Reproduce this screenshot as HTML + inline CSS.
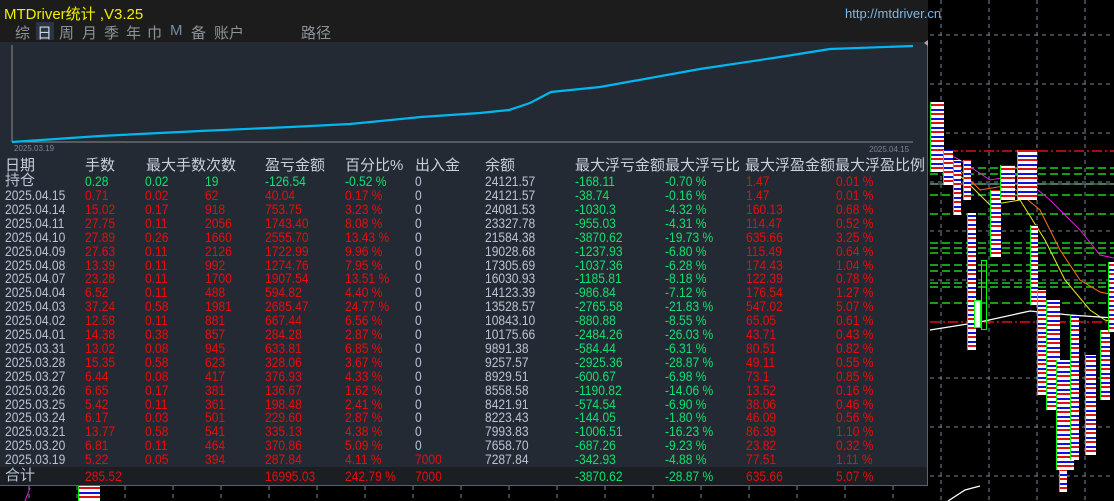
<!DOCTYPE html>
<html><head><meta charset="utf-8"><style>
*{margin:0;padding:0;box-sizing:border-box}
body{width:1114px;height:501px;overflow:hidden;background:#000;position:relative;font-family:"Liberation Sans","Noto Sans CJK SC",sans-serif}
#panel{position:absolute;left:0;top:0;width:928px;height:486px;background:#242a33;border-right:1px solid #5a6270;border-bottom:1px solid #5a6270}
#top{position:absolute;left:0;top:0;width:928px;height:42px;background:#1c1c1c}
.t{position:absolute;white-space:nowrap}
.tab{position:absolute;top:22px;font-size:15px;color:#8e939a}
.row{position:absolute;left:0;width:928px;height:14px;font-size:14px;line-height:14px}
.row span{position:absolute;white-space:nowrap;transform:scaleX(.86);transform-origin:left}
.r{color:#e80c0c}.g{color:#10e070}.w{color:#b8c4d6}
.blob{position:absolute;background:repeating-linear-gradient(0deg,#fff 0 3px,#e01010 3px 5px,#fff 5px 7px,#1010e0 7px 9px);border-left:1px solid #0f0}
</style></head><body>
<svg width="1114" height="501" style="position:absolute;left:0;top:0">
<g stroke="#7a8696" stroke-dasharray="4,4" stroke-width="1">
<line x1="941" y1="0" x2="941" y2="501"/><line x1="989" y1="0" x2="989" y2="501"/><line x1="1037" y1="0" x2="1037" y2="501"/><line x1="1085" y1="0" x2="1085" y2="501"/>
<line x1="930" y1="35" x2="1114" y2="35"/><line x1="930" y1="84" x2="1114" y2="84"/><line x1="930" y1="133" x2="1114" y2="133"/><line x1="930" y1="182" x2="1114" y2="182"/><line x1="930" y1="231" x2="1114" y2="231"/><line x1="930" y1="280" x2="1114" y2="280"/><line x1="930" y1="378" x2="1114" y2="378"/><line x1="930" y1="427" x2="1114" y2="427"/><line x1="930" y1="476" x2="1114" y2="476"/>
<line x1="29" y1="486" x2="29" y2="501"/><line x1="77" y1="486" x2="77" y2="501"/><line x1="125" y1="486" x2="125" y2="501"/><line x1="173" y1="486" x2="173" y2="501"/><line x1="221" y1="486" x2="221" y2="501"/><line x1="269" y1="486" x2="269" y2="501"/><line x1="317" y1="486" x2="317" y2="501"/><line x1="365" y1="486" x2="365" y2="501"/><line x1="413" y1="486" x2="413" y2="501"/><line x1="461" y1="486" x2="461" y2="501"/><line x1="509" y1="486" x2="509" y2="501"/><line x1="557" y1="486" x2="557" y2="501"/><line x1="605" y1="486" x2="605" y2="501"/><line x1="653" y1="486" x2="653" y2="501"/><line x1="701" y1="486" x2="701" y2="501"/><line x1="749" y1="486" x2="749" y2="501"/><line x1="797" y1="486" x2="797" y2="501"/><line x1="845" y1="486" x2="845" y2="501"/><line x1="893" y1="486" x2="893" y2="501"/>
</g>
<g stroke="#20d020" stroke-dasharray="8,4" stroke-width="1.5">
<line x1="930" y1="168" x2="1114" y2="168"/><line x1="930" y1="174" x2="1114" y2="174"/><line x1="930" y1="184" x2="1114" y2="184"/><line x1="930" y1="195" x2="1114" y2="195"/><line x1="930" y1="214" x2="1114" y2="214"/><line x1="930" y1="243" x2="1114" y2="243"/><line x1="930" y1="248" x2="1114" y2="248"/><line x1="930" y1="253" x2="1114" y2="253"/><line x1="930" y1="265" x2="1114" y2="265"/><line x1="930" y1="271" x2="1114" y2="271"/><line x1="930" y1="283" x2="1114" y2="283"/><line x1="930" y1="287" x2="1114" y2="287"/><line x1="930" y1="303" x2="1114" y2="303"/>
</g>
<g stroke="#e01010" stroke-dasharray="10,3,2,3" stroke-width="1.5">
<line x1="930" y1="151" x2="1114" y2="151"/><line x1="930" y1="322" x2="1114" y2="322"/>
</g>
<line x1="930" y1="184" x2="1114" y2="184" stroke="#8090a0"/>
<polyline points="940,150 960,160 990,180 1020,175 1050,200 1080,230 1100,255 1114,258" fill="none" stroke="#e020e0" stroke-width="1"/>
<polyline points="940,155 960,170 980,190 1010,185 1040,210 1060,250 1080,280 1100,292 1114,295" fill="none" stroke="#ff7010" stroke-width="1"/>
<polyline points="940,160 965,180 990,205 1020,200 1045,240 1065,280 1090,310 1105,320 1114,322" fill="none" stroke="#f0f020" stroke-width="1"/>
<polyline points="930,330 980,322 1030,311 1070,315 1114,318" fill="none" stroke="#fff" stroke-width="1.3"/>
<polyline points="948,501 965,490 980,486" fill="none" stroke="#fff" stroke-width="1.3"/>
<line x1="30" y1="488" x2="25" y2="501" stroke="#e020e0"/>
</svg>
<div class="blob" style="left:930px;top:102px;width:14px;height:70px"></div>
<div class="blob" style="left:943px;top:150px;width:10px;height:35px"></div>
<div class="blob" style="left:953px;top:160px;width:8px;height:55px"></div>
<div class="blob" style="left:963px;top:160px;width:8px;height:40px"></div>
<div class="blob" style="left:967px;top:213px;width:9px;height:137px"></div>
<div class="blob" style="left:990px;top:190px;width:11px;height:67px"></div>
<div class="blob" style="left:1000px;top:165px;width:15px;height:35px"></div>
<div class="blob" style="left:1017px;top:150px;width:20px;height:50px"></div>
<div class="blob" style="left:1030px;top:225px;width:8px;height:80px"></div>
<div class="blob" style="left:1037px;top:290px;width:9px;height:105px"></div>
<div class="blob" style="left:1046px;top:300px;width:14px;height:110px"></div>
<div class="blob" style="left:1056px;top:360px;width:18px;height:110px"></div>
<div class="blob" style="left:1070px;top:315px;width:9px;height:145px"></div>
<div class="blob" style="left:1085px;top:355px;width:11px;height:100px"></div>
<div class="blob" style="left:1100px;top:330px;width:10px;height:70px"></div>
<div class="blob" style="left:1108px;top:262px;width:6px;height:70px"></div>
<div class="blob" style="left:1059px;top:470px;width:8px;height:22px"></div>
<div class="blob" style="left:78px;top:486px;width:22px;height:15px"></div>
<div style="position:absolute;left:974px;top:300px;width:7px;height:28px;border:1px solid #0f0;background:#fff"></div>
<div style="position:absolute;left:981px;top:260px;width:6px;height:70px;border:1px solid #0f0"></div>
<div id="panel">
<div id="top"></div>
<div class="t" style="left:4px;top:3px;font-size:15px;color:#f0f000">MTDriver统计 ,V3.25</div>
<div class="t" style="left:845px;top:6px;font-size:13px;color:#7cb8e8">http://mtdriver.cn</div>
<div class="tab" style="left:15px">综</div>
<div style="position:absolute;left:36px;top:22px;width:18px;height:18px;background:#2c3440"></div>
<div class="tab" style="left:37px;color:#c8d4e8">日</div>
<div class="tab" style="left:59px">周</div>
<div class="tab" style="left:82px">月</div>
<div class="tab" style="left:104px">季</div>
<div class="tab" style="left:126px">年</div>
<div class="tab" style="left:147px">巾</div>
<div class="tab" style="left:170px;color:#7a8aa0">M</div>
<div class="tab" style="left:191px">备</div>
<div class="tab" style="left:214px">账户</div>
<div class="tab" style="left:301px">路径</div>
<svg width="928" height="155" style="position:absolute;left:0;top:0">
<line x1="12" y1="45" x2="12" y2="142" stroke="#8a8a8a"/>
<line x1="12" y1="142" x2="913" y2="142" stroke="#8a8a8a"/>
<polyline points="12,142 100,136 200,131 291,127 350,124 421,117 480,113 509,110 530,103 551,92 600,87 700,69 780,57 830,49 913,46" fill="none" stroke="#00b8f0" stroke-width="2.2"/>
<text x="14" y="151" font-size="8" fill="#7a8696" font-family="Liberation Sans">2025.03.19</text>
<text x="869" y="152" font-size="8" fill="#7a8696" font-family="Liberation Sans">2025.04.15</text>
<polygon points="928,40 924,43 928,46" fill="#aaa"/>
</svg>
<div class="row w" style="top:158px;font-size:15px;line-height:16px;color:#c8d0dc"><span style="left:5px;transform:none">日期</span><span style="left:85px;transform:none">手数</span><span style="left:146px;transform:none">最大手数次数</span><span style="left:265px;transform:none">盈亏金额</span><span style="left:345px;transform:none">百分比%</span><span style="left:415px;transform:none">出入金</span><span style="left:485px;transform:none">余额</span><span style="left:575px;transform:none">最大浮亏金额</span><span style="left:665px;transform:none">最大浮亏比</span><span style="left:745px;transform:none">最大浮盈金额</span><span style="left:835px;transform:none">最大浮盈比例</span></div>
<div class="row" style="top:174px"><span class="w" style="left:5px;font-size:15px;transform:none">持仓</span><span class="g" style="left:85px">0.28</span><span class="g" style="left:145px">0.02</span><span class="g" style="left:205px">19</span><span class="g" style="left:265px">-126.54</span><span class="g" style="left:345px">-0.52 %</span><span class="w" style="left:415px">0</span><span class="w" style="left:485px">24121.57</span><span class="g" style="left:575px">-168.11</span><span class="g" style="left:665px">-0.70 %</span><span class="r" style="left:746px">1.47</span><span class="r" style="left:836px">0.01 %</span></div>
<div id="rows"></div>
<div style="position:absolute;left:0;top:467px;width:927px;height:18px;background:#1b1e23"></div>
<div class="row" style="top:469px"><span class="w" style="left:5px;font-size:15px;transform:none">合计</span><span class="r" style="left:85px">285.52</span><span class="r" style="left:265px">16995.03</span><span class="r" style="left:345px">242.79 %</span><span class="r" style="left:415px">7000</span><span class="g" style="left:575px">-3870.62</span><span class="g" style="left:665px">-28.87 %</span><span class="r" style="left:746px">635.66</span><span class="r" style="left:836px">5.07 %</span></div>
</div>
<script>
var d=[
["2025.04.15","0.71","0.02","62","40.04","0.17 %","0","24121.57","-38.74","-0.16 %","1.47","0.01 %"],
["2025.04.14","15.02","0.17","918","753.75","3.23 %","0","24081.53","-1030.3","-4.32 %","160.13","0.68 %"],
["2025.04.11","27.75","0.11","2056","1743.40","8.08 %","0","23327.78","-955.03","-4.31 %","114.47","0.52 %"],
["2025.04.10","27.89","0.26","1660","2555.70","13.43 %","0","21584.38","-3870.62","-19.73 %","635.66","3.25 %"],
["2025.04.09","27.63","0.11","2126","1722.99","9.96 %","0","19028.68","-1237.93","-6.80 %","115.49","0.64 %"],
["2025.04.08","13.39","0.11","992","1274.76","7.95 %","0","17305.69","-1037.36","-6.28 %","174.43","1.04 %"],
["2025.04.07","23.28","0.11","1700","1907.54","13.51 %","0","16030.93","-1185.81","-8.18 %","122.39","0.78 %"],
["2025.04.04","6.52","0.11","488","594.82","4.40 %","0","14123.39","-986.84","-7.12 %","176.54","1.27 %"],
["2025.04.03","37.24","0.58","1981","2685.47","24.77 %","0","13528.57","-2765.58","-21.83 %","547.02","5.07 %"],
["2025.04.02","12.58","0.11","881","667.44","6.56 %","0","10843.10","-880.88","-8.55 %","65.05","0.61 %"],
["2025.04.01","14.38","0.38","857","284.28","2.87 %","0","10175.66","-2484.26","-26.03 %","43.71","0.43 %"],
["2025.03.31","13.02","0.08","945","633.81","6.85 %","0","9891.38","-584.44","-6.31 %","80.51","0.82 %"],
["2025.03.28","15.35","0.58","623","328.06","3.67 %","0","9257.57","-2925.36","-28.87 %","49.11","0.55 %"],
["2025.03.27","6.44","0.08","417","376.93","4.33 %","0","8929.51","-600.67","-6.98 %","73.1","0.85 %"],
["2025.03.26","6.65","0.17","381","136.67","1.62 %","0","8558.58","-1190.82","-14.06 %","13.52","0.16 %"],
["2025.03.25","5.42","0.11","361","198.48","2.41 %","0","8421.91","-574.54","-6.90 %","38.06","0.46 %"],
["2025.03.24","6.17","0.03","501","229.60","2.87 %","0","8223.43","-144.05","-1.80 %","46.09","0.56 %"],
["2025.03.21","13.77","0.58","541","335.13","4.38 %","0","7993.83","-1006.51","-16.23 %","86.39","1.10 %"],
["2025.03.20","6.81","0.11","464","370.86","5.09 %","0","7658.70","-687.26","-9.23 %","23.82","0.32 %"],
["2025.03.19","5.22","0.05","394","287.84","4.11 %","7000","7287.84","-342.93","-4.88 %","77.51","1.11 %"]];
var L=[5,85,145,205,265,345,415,485,575,665,746,836],C=["w","r","r","r","r","r","w","w","g","g","r","r"],h="";
d.forEach(function(r,i){h+='<div class="row" style="top:'+(188+i*13.9)+'px">';r.forEach(function(v,j){var c=C[j];if(j==6&&v!="0")c="r";h+='<span class="'+c+'" style="left:'+L[j]+'px">'+v+'</span>'});h+='</div>'});
document.getElementById("rows").outerHTML=h;
</script>
</body></html>
